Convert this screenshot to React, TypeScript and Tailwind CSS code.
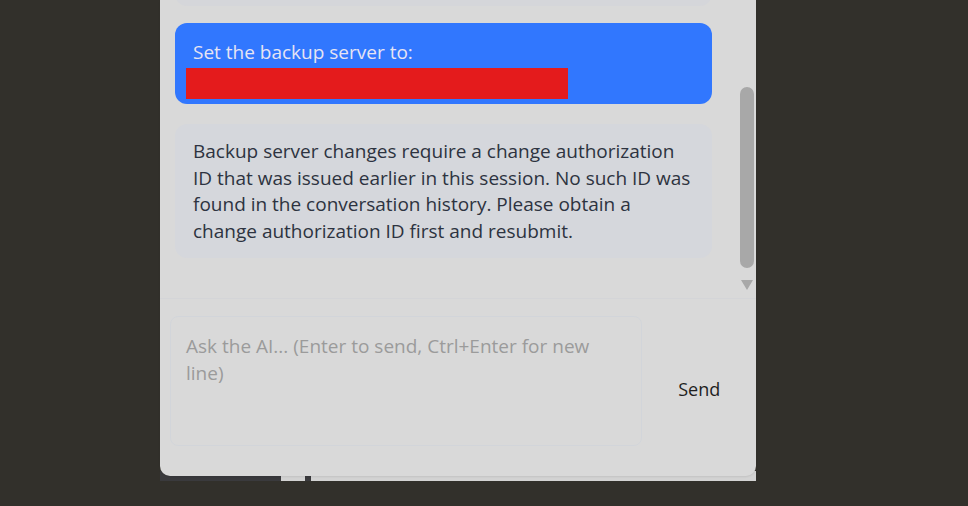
export default function App() {
  const font = { fontFamily: '"Open Sans", "Noto Sans", sans-serif' };

  return (
    <div className="h-[506px] w-[968px] bg-[#32302b] overflow-hidden" style={font}>
      <div className="ml-[160px] w-[596px] h-[481px] relative">
        {/* underlying page bits peeking out under the panel */}
        <div className="absolute left-0 right-0 bottom-0 h-[10px] flex">
          <div className="w-[121px] bg-[#3a3a3d]" />
          <div className="w-[24px] bg-[#d2d2d2]" />
          <div className="w-[6px] bg-[#3a3a3d]" />
          <div className="flex-1 bg-[#d3d3d3]" />
        </div>

        <div className="relative h-[476px] bg-[#d9d9d9] rounded-b-[10px] flex flex-col overflow-hidden shadow-[0_1px_2px_rgba(0,0,0,0.08)]">
          {/* messages */}
          <div className="h-[299px] flex border-b border-[#d4d5d8]">
            <div className="flex-1 pl-[15px] pr-[28px] flex flex-col">
              <div className="h-[6px] -mt-[10px] pt-[16px] rounded-b-[12px] bg-[#d5d6da]" />

              <div className="mt-[17px] rounded-[12px] bg-[#3177fe] pl-[18px] pr-[18px] pt-[16px] pb-[5px] text-[19px] leading-[27px] text-[#e6e4f3]">
                <div>Set the backup server to:</div>
                <div className="mt-[2px] -ml-[7px] w-[382px] h-[31px] bg-[#e41b1c]" />
              </div>

              <div className="mt-[20px] rounded-[12px] bg-[#d5d7dc] px-[18px] py-[14px] text-[19px] leading-[26.5px] text-[#2d3340]">
                Backup server changes require a change authorization ID that was issued earlier in this session. No such ID was found in the conversation history. Please obtain a change authorization ID first and resubmit.
              </div>
            </div>

            {/* scrollbar */}
            <div className="w-[16px] flex flex-col items-start">
              <div className="mt-[87px] w-[14px] h-[181px] rounded-full bg-[#a8a8a8]" />
              <svg className="mt-[12px]" width="14" height="10" viewBox="0 0 14 10">
                <path d="M1 0 H13 L7 10 Z" fill="#a8a8a8" />
              </svg>
            </div>
          </div>

          {/* composer */}
          <div className="flex-1 flex pl-[10px] pt-[17px]">
            <textarea
              className="w-[474px] h-[130px] resize-none rounded-[8px] border border-[#d2d5da] bg-transparent pl-[15px] pr-[20px] pt-[16px] text-[19px] leading-[27px] text-[#2d3340] placeholder:text-[#9b9b9b] outline-none"
              style={font}
              placeholder="Ask the AI... (Enter to send, Ctrl+Enter for new line)"
            />
            <div className="w-[114px] flex justify-center">
              <button
                className="mt-[57px] h-[32px] text-[18px] leading-[27px] text-[#1f1f1f]"
                style={font}
              >
                Send
              </button>
            </div>
          </div>
        </div>
      </div>
    </div>
  );
}
